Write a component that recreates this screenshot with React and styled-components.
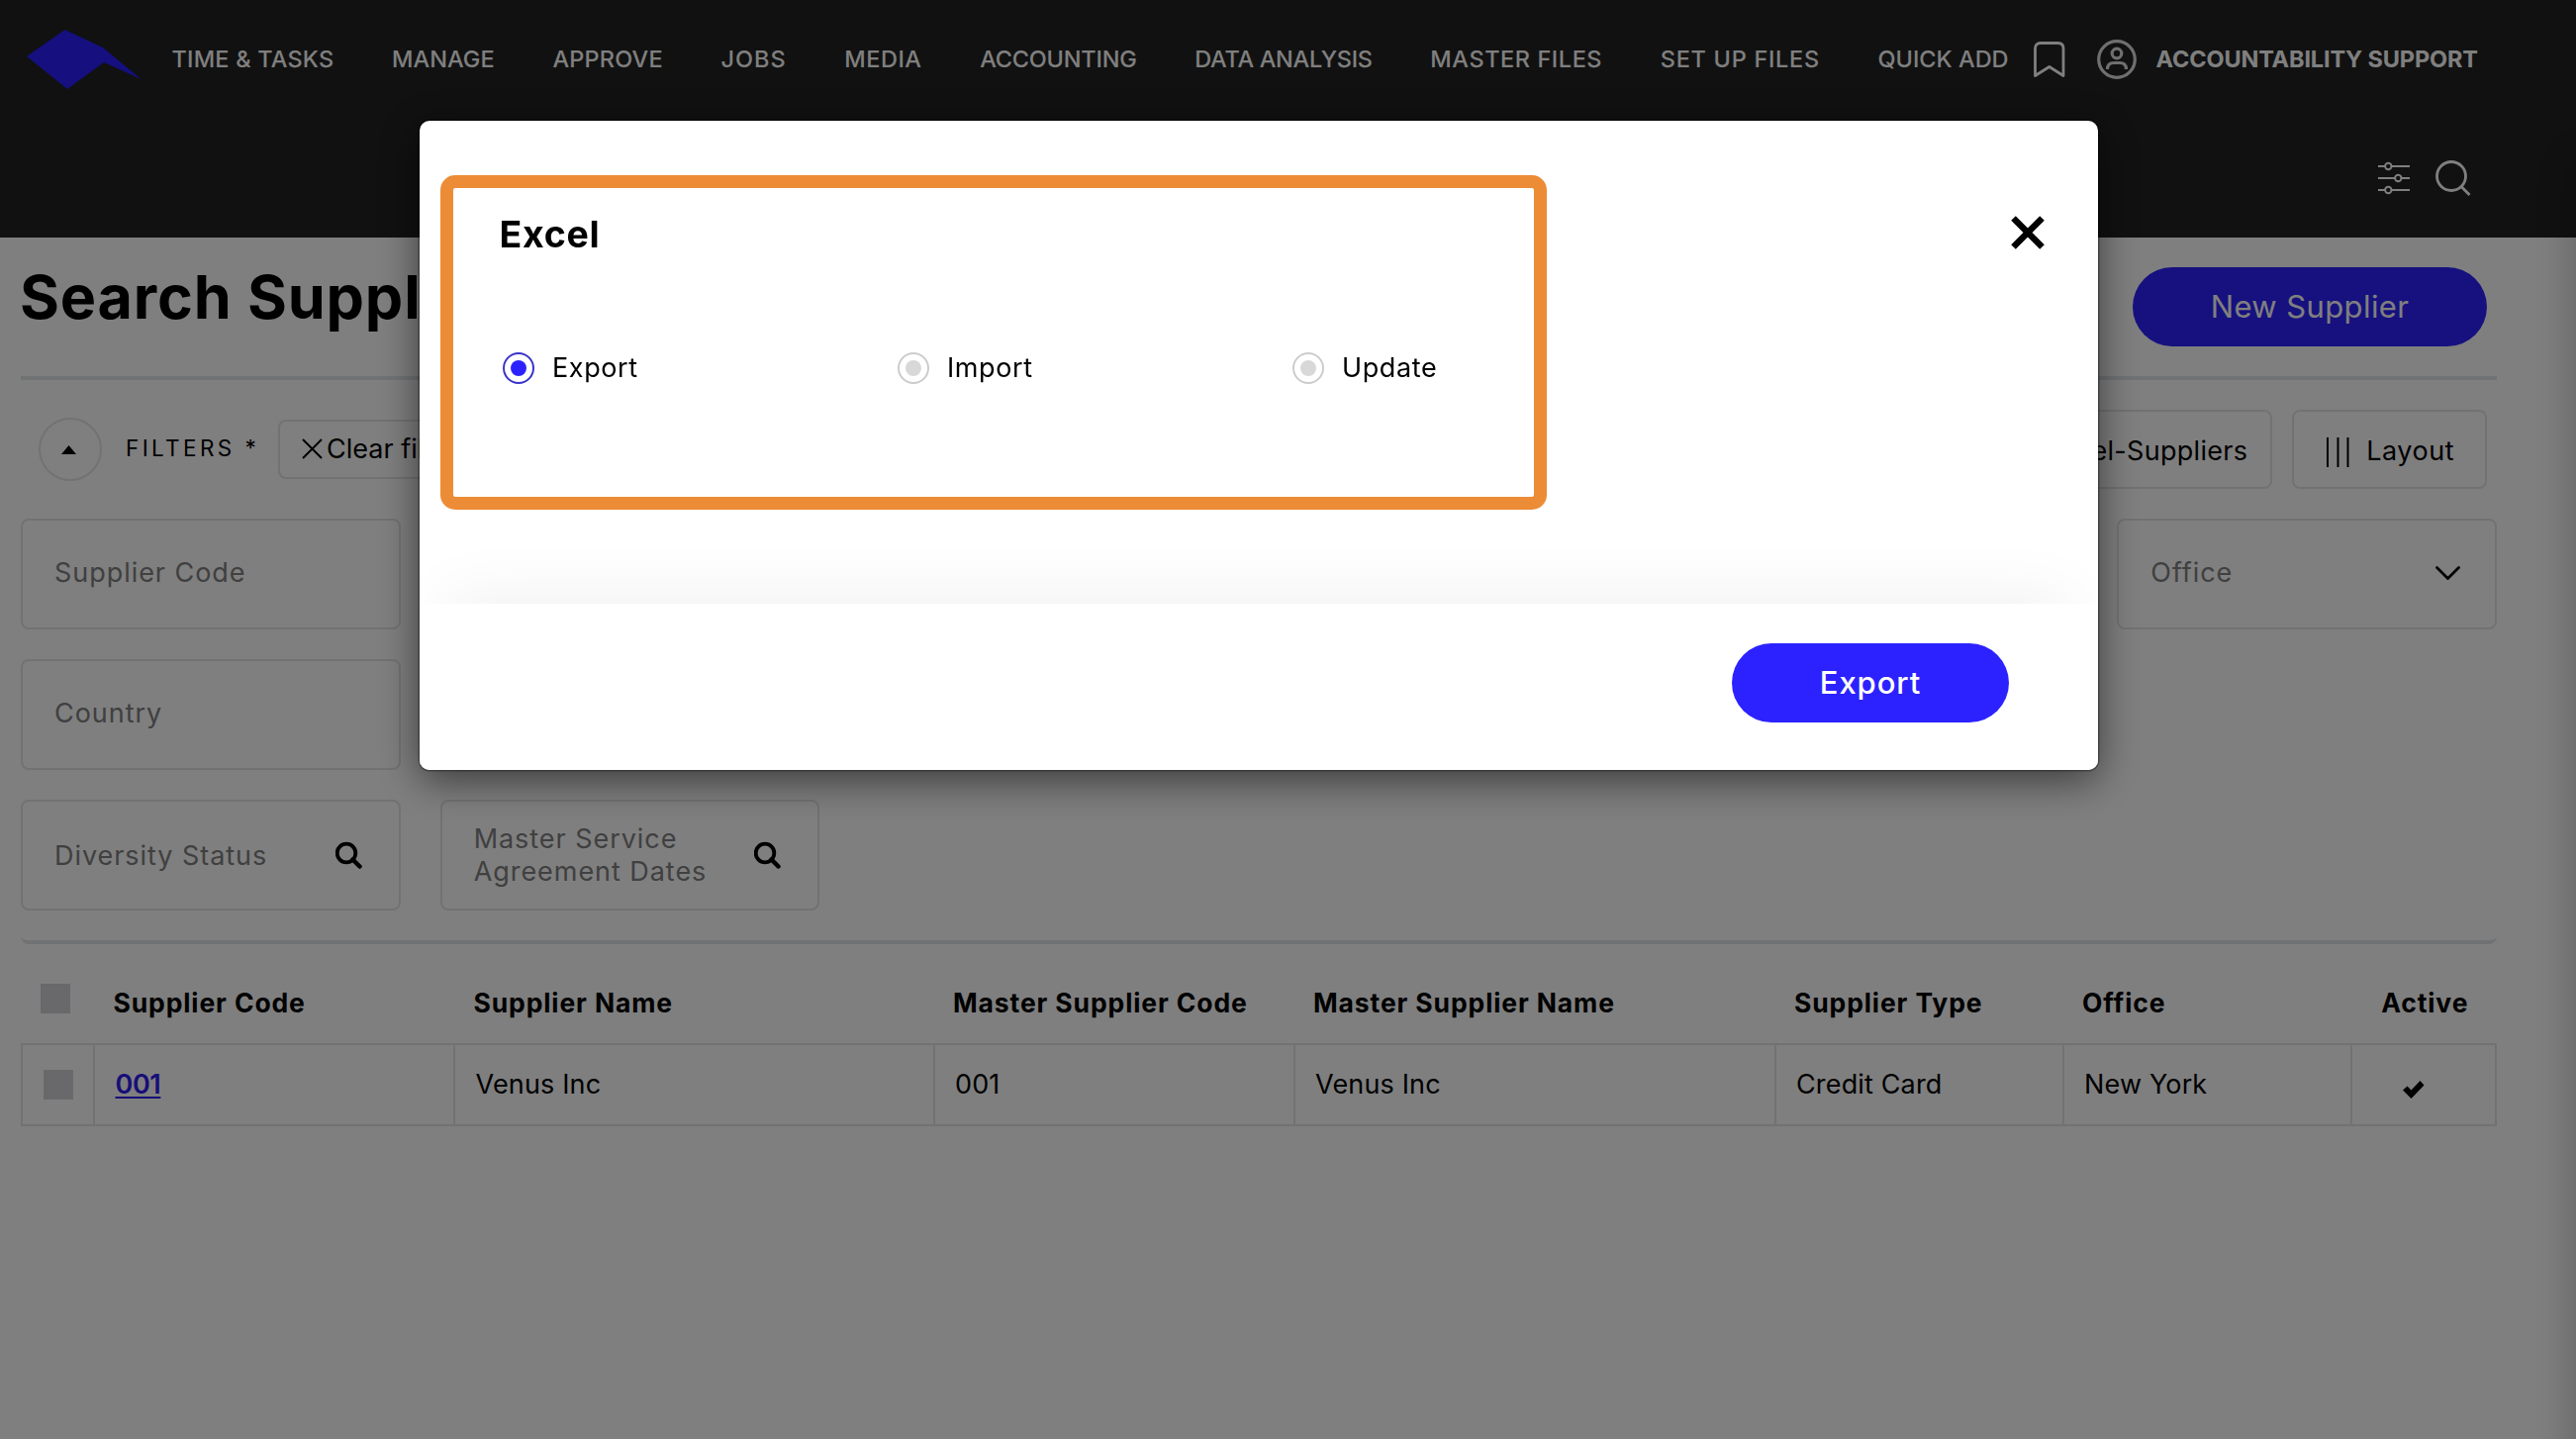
import React, { useState } from 'react';
import styled, { createGlobalStyle } from 'styled-components';

const GlobalStyle = createGlobalStyle`
    * { box-sizing: border-box; }
    body {
        margin: 0;
        background: #fff;
        color: #000;
        font-family: Inter, "Liberation Sans", sans-serif;
        font-size: 27px;
        overflow: hidden;
    }
    svg { display: block; flex: none; }
`;

const Page = styled.div`
    height: 1454px;
    overflow: hidden;
`;

// the edge of the help drawer, which is closed, throws a soft shadow on the page
const DrawerShadow = styled.div`
    position: fixed;
    top: 160px; right: -40px; bottom: -60px;
    width: 40px;
    box-shadow: 0 0 44px rgba(0, 0, 0, 0.27);
`;

/* header */
const Header = styled.header`
    height: 240px;
    background: #222;
    color: #fff;
`;

const NavRow = styled.nav`
    display: flex;
    align-items: center;
    height: 120px;
    padding-left: 27px;
`;

const NavList = styled.div`
    display: flex;
    gap: 58.7px;
    margin-left: 30.5px;
`;

const NavItem = styled.span`
    font-size: 23.5px;
    font-weight: 500;
    line-height: 30px;
    letter-spacing: ${(p) => p.$ls}px;
    white-space: nowrap;
`;

const UserArea = styled.div`
    display: flex;
    align-items: center;
    gap: 32px;
    margin-left: 25px;
`;

const UserLink = styled.div`
    display: flex;
    align-items: center;
    gap: 20px;
`;

const UserName = styled.span`
    padding-bottom: 1px;
    font-size: 23.5px;
    font-weight: 700;
    letter-spacing: -0.16px;
`;

const ToolRow = styled.div`
    display: flex;
    justify-content: flex-end;
    align-items: center;
    gap: 26px;
    height: 120px;
    padding-right: 105px;
`;

/* main */
const Main = styled.main`
    width: 2502px;
    margin-left: 21px;
`;

const TitleRow = styled.div`
    display: flex;
    align-items: center;
    justify-content: space-between;
    height: 144px;
    padding-right: 10px;
    border-bottom: 4px solid #e2e5e8;
`;

const Title = styled.h1`
    margin: 0 0 20px -1px;
    font-size: 61px;
    font-weight: 700;
    line-height: 70px;
    letter-spacing: 0.85px;
`;

const Pill = styled.button`
    width: ${(p) => p.$width}px;
    height: 80px;
    padding: 0 0 1px;
    border: none;
    border-radius: 40px;
    background: #2c22ff;
    color: #fff;
    font-family: inherit;
    font-size: 31px;
    font-weight: ${(p) => p.$weight || 400};
    letter-spacing: ${(p) => p.$ls}px;
`;

const FilterBar = styled.div`
    display: flex;
    align-items: center;
    height: 140px;
    padding: 0 10px 0 18px;
`;

const Toggle = styled.div`
    display: flex;
    align-items: center;
    justify-content: center;
    width: 64px;
    height: 64px;
    padding-right: 3px;
    border: 2px solid #e4e4e4;
    border-radius: 50%;
`;

const FilterTitle = styled.span`
    width: 154px;
    margin: 0 0 4px 24px;
    font-size: 22.5px;
    letter-spacing: 3.4px;
    white-space: nowrap;
`;

const BoxButton = styled.div`
    display: flex;
    align-items: center;
    gap: ${(p) => p.$gap}px;
    height: ${(p) => p.$height}px;
    padding: ${(p) => p.$pad};
    border: 2px solid #e4e4e4;
    border-radius: 8px;
    letter-spacing: ${(p) => p.$ls}px;
    white-space: nowrap;
`;

const BarRight = styled.div`
    display: flex;
    gap: 20px;
    margin-left: auto;
`;

const FilterGrid = styled.div`
    display: grid;
    grid-template-columns: repeat(6, 1fr);
    grid-auto-rows: 112px;
    gap: 30px 40px;
    padding-bottom: 30px;
    border-bottom: 4px solid #e2e5e8;
    border-radius: 8px;
`;

const Field = styled.div`
    grid-column: ${(p) => p.$col};
    display: flex;
    align-items: center;
    justify-content: space-between;
    padding: ${(p) => (p.$search ? '0 36px 0 32px' : '0 35px 3px 32px')};
    border: 2px solid #e4e4e4;
    border-radius: 8px;
    color: #808080;
    line-height: 33px;
    letter-spacing: 0.95px;
    svg { color: #000; }
`;

/* table */
const Row = styled.div`
    display: grid;
    grid-template-columns: 73px 364px 484.5px 364px 486px 291px 291px 1fr;
`;

const HeadRow = styled(Row)`
    height: 100px;
    font-size: 26.5px;
    font-weight: 700;
    letter-spacing: 0.88px;
`;

const HeadCell = styled.div`
    display: flex;
    align-items: center;
    justify-content: ${(p) => (p.$center ? 'center' : 'flex-start')};
    padding: ${(p) => (p.$center ? '18px 0 0 3px' : '18px 0 0 20.5px')};
`;

const HeadCheck = styled.div`
    padding: 40px 0 0 20px;
`;

const BodyRow = styled(Row)`
    height: 84px;
    border: 2px solid #e4e4e4;
    border-width: 2px 2px 2px 0;
    letter-spacing: 0.15px;
`;

const Cell = styled.div`
    display: flex;
    align-items: center;
    padding: 0 0 2px 20.5px;
    border-left: 2px solid #e4e4e4;
`;

const SelectCell = styled(Cell)`
    padding-bottom: 0;
`;

const ActiveCell = styled(Cell)`
    padding: 10px 0 0 51px;
`;

const Checkbox = styled.div`
    width: 30px;
    height: 30px;
    background: #d3d3d6;
`;

const CodeLink = styled.a`
    color: #2e1cf0;
    font-weight: 600;
    letter-spacing: -0.4px;
    text-decoration: underline;
    text-decoration-thickness: 2px;
    text-underline-offset: 3px;
`;

/* modal */
const Overlay = styled.div`
    position: fixed;
    inset: 0;
    display: flex;
    align-items: flex-start;
    padding: 122px 0 0 424px;
    background: rgba(0, 0, 0, 0.5);
`;

const Modal = styled.div`
    position: relative;
    width: 1696px;
    height: 656px;
    border-radius: 10px;
    background: #fff;
    box-shadow: 0 0 0 1.5px rgba(0, 0, 0, 0.3), 0 10px 40px rgba(0, 0, 0, 0.55);
`;

const ModalBody = styled.div`
    height: 488px;
    padding-top: 83px;
    overflow: hidden;
`;

const ModalHead = styled.div`
    display: flex;
    align-items: center;
    justify-content: space-between;
    height: 60px;
    padding: 0 54px 0 80.5px;
`;

const ModalTitle = styled.h2`
    margin: 2px 0 0;
    font-size: 37.5px;
    font-weight: 700;
    letter-spacing: 0.7px;
`;

const Options = styled.div`
    display: flex;
    margin-top: 87px;
    padding-left: 84px;
`;

const Option = styled.label`
    display: flex;
    align-items: center;
    width: 399px;
    height: 40px;
`;

const OptionText = styled.span`
    padding: 0 0 2px 18px;
    letter-spacing: 0.6px;
`;

const Radio = styled.span`
    display: flex;
    align-items: center;
    justify-content: center;
    width: 32px;
    height: 32px;
    border: 2px solid ${(p) => (p.$on ? '#3a33cc' : '#ccc')};
    border-radius: 50%;
    &::after {
        content: '';
        width: 16px;
        height: 16px;
        border-radius: 50%;
        background: ${(p) => (p.$on ? '#2c22ff' : '#d8d8d8')};
    }
`;

const ModalFooter = styled.div`
    display: flex;
    align-items: center;
    justify-content: flex-end;
    height: 168px;
    padding: 0 90px 8px 0;
    border-radius: 0 0 10px 10px;
    background: #fff;
`;

const FooterShadow = styled.div`
    height: 60px;
    margin: 218px 30px 0;
    box-shadow: 0 0 70px rgba(0, 0, 0, 0.08);
`;

const Highlight = styled.div`
    position: absolute;
    left: 21px; top: 55px;
    width: 1118px; height: 337.5px;
    border: 13px solid #ec8c36;
    border-radius: 15px;
    pointer-events: none;
`;

const navItems = [
    { label: 'TIME & TASKS', ls: 0.2 },
    { label: 'MANAGE', ls: 0.05 },
    { label: 'APPROVE', ls: 0.19 },
    { label: 'JOBS', ls: 1 },
    { label: 'MEDIA', ls: 0.51 },
    { label: 'ACCOUNTING', ls: -0.22 },
    { label: 'DATA ANALYSIS', ls: -0.3 },
    { label: 'MASTER FILES', ls: 0.56 },
    { label: 'SET UP FILES', ls: 0.7 },
    { label: 'QUICK ADD', ls: 0 }
];

const columns = ['Supplier Code', 'Supplier Name', 'Master Supplier Code', 'Master Supplier Name', 'Supplier Type', 'Office'];

const suppliers = [
    { code: '001', name: 'Venus Inc', masterCode: '001', masterName: 'Venus Inc', type: 'Credit Card', office: 'New York' }
];

const Logo = () => (
    <svg width="116" height="60" viewBox="0 0 116 60">
        <path d="M0 27 38.5 0 77 18 115.5 50 78 33 41 60Z" fill="#2a1eff" />
    </svg>
);

const BookmarkIcon = () => (
    <svg width="32" height="36" viewBox="0 0 32 36" fill="none" stroke="#fff" strokeWidth="2.8" strokeLinejoin="round">
        <path d="M1.5 34.5V7q0-5.5 5.5-5.5h17.5q5.5 0 5.5 5.5v27.5L15.8 25.5z" />
    </svg>
);

const UserIcon = () => (
    <svg width="40" height="40" viewBox="0 0 40 40" fill="none" stroke="#fff" strokeWidth="3.2" opacity="0.85">
        <circle cx="20" cy="20" r="18.3" />
        <circle cx="20" cy="14" r="4.8" />
        <path d="M10.5 30q0-6.5 6.5-6.5h6q6.5 0 6.5 6.5" />
    </svg>
);

const SlidersIcon = () => (
    <svg width="32" height="34" viewBox="0 0 32 34" fill="#222" stroke="#fff" strokeWidth="2">
        <path d="M0 5h32M0 17h32M0 29h32" />
        <circle cx="10.3" cy="5" r="3.2" />
        <circle cx="20.3" cy="17" r="3.2" />
        <circle cx="10.3" cy="29" r="3.2" />
    </svg>
);

const SearchIcon = () => (
    <svg width="37" height="38" viewBox="0 0 37 38" fill="none" stroke="#fff" strokeWidth="2.8">
        <circle cx="16" cy="17" r="14.5" />
        <path d="M26 27.5 34.5 36" />
    </svg>
);

const FieldSearch = () => (
    <svg width="28" height="28" viewBox="0 0 28 28" fill="none" stroke="currentColor" strokeWidth="3.8">
        <circle cx="11" cy="12" r="9.3" />
        <path d="M17.5 18.5 24.5 25.5" strokeWidth="4.5" strokeLinecap="round" />
    </svg>
);

const Chevron = () => (
    <svg width="25" height="14" viewBox="0 0 25 14" fill="none" stroke="currentColor" strokeWidth="2.8" strokeLinecap="round">
        <path d="M1.5 1.5 12.5 12.5 23.5 1.5" />
    </svg>
);

export default function App() {
    const [mode, setMode] = useState('Export');

    return (
        <>
            <GlobalStyle />
            <Page>
                <Header>
                    <NavRow>
                        <Logo />
                        <NavList>
                            {navItems.map((e) => <NavItem key={e.label} $ls={e.ls}>{e.label}</NavItem>)}
                        </NavList>
                        <UserArea>
                            <BookmarkIcon />
                            <UserLink>
                                <UserIcon />
                                <UserName>ACCOUNTABILITY SUPPORT</UserName>
                            </UserLink>
                        </UserArea>
                    </NavRow>
                    <ToolRow>
                        <SlidersIcon />
                        <SearchIcon />
                    </ToolRow>
                </Header>

                <Main>
                    <TitleRow>
                        <Title>Search Suppliers</Title>
                        <Pill $width={358} $ls={0.4}>New Supplier</Pill>
                    </TitleRow>

                    <FilterBar>
                        <Toggle>
                            <svg width="15" height="9" viewBox="0 0 15 9"><path d="M0 9 7.5 0 15 9Z" /></svg>
                        </Toggle>
                        <FilterTitle>FILTERS *</FilterTitle>
                        <BoxButton $height={60} $gap={4} $pad="0 22px 1px" $ls={0}>
                            <svg width="21" height="21" viewBox="0 0 21 21" stroke="#000" strokeWidth="2">
                                <path d="M1 1 20 20M20 1 1 20" />
                            </svg>
                            Clear filters
                        </BoxButton>
                        <BarRight>
                            <BoxButton $height={80} $gap={16} $pad="2px 23px 0" $ls={0.3}>Excel-Suppliers</BoxButton>
                            <BoxButton $height={80} $gap={17} $pad="2px 31px 0 33px" $ls={0.5}>
                                <svg width="23" height="36" viewBox="0 0 23 36" stroke="#000" strokeWidth="2">
                                    <path d="M1 5v30M11.5 5v30M21.5 5v30" />
                                </svg>
                                Layout
                            </BoxButton>
                        </BarRight>
                    </FilterBar>

                    <FilterGrid>
                        <Field>Supplier Code</Field>
                        <Field $col={6}>Office <Chevron /></Field>
                        <Field $col={1}>Country</Field>
                        <Field $col={1} $search>Diversity Status <FieldSearch /></Field>
                        <Field $search><span>Master Service<br />Agreement Dates</span> <FieldSearch /></Field>
                    </FilterGrid>

                    <HeadRow>
                        <HeadCheck><Checkbox /></HeadCheck>
                        {columns.map((c) => <HeadCell key={c}>{c}</HeadCell>)}
                        <HeadCell $center>Active</HeadCell>
                    </HeadRow>
                    {suppliers.map((s) => (
                        <BodyRow key={s.code}>
                            <SelectCell><Checkbox /></SelectCell>
                            <Cell><CodeLink>{s.code}</CodeLink></Cell>
                            <Cell>{s.name}</Cell>
                            <Cell>{s.masterCode}</Cell>
                            <Cell>{s.masterName}</Cell>
                            <Cell>{s.type}</Cell>
                            <Cell>{s.office}</Cell>
                            <ActiveCell>
                                <svg width="22" height="18" viewBox="0 0 22 18"><path d="M0 9.5 4.5 5.5 8.5 9.5 17.5 0 21.5 4.5 8.5 18Z" /></svg>
                            </ActiveCell>
                        </BodyRow>
                    ))}
                </Main>
                <DrawerShadow />
            </Page>

            <Overlay>
                <Modal>
                    <ModalBody>
                        <ModalHead>
                            <ModalTitle>Excel</ModalTitle>
                            <svg width="34" height="34" viewBox="0 0 34 34" stroke="#000" strokeWidth="6.5">
                                <path d="M2.5 2.5 31.5 31.5M31.5 2.5 2.5 31.5" />
                            </svg>
                        </ModalHead>
                        <Options>
                            {['Export', 'Import', 'Update'].map((o) => (
                                <Option key={o} onClick={() => setMode(o)}>
                                    <Radio $on={mode === o} />
                                    <OptionText>{o}</OptionText>
                                </Option>
                            ))}
                        </Options>
                        <FooterShadow />
                    </ModalBody>
                    <ModalFooter>
                        <Pill $width={280} $weight={500} $ls={0.9}>{mode}</Pill>
                    </ModalFooter>
                    <Highlight />
                </Modal>
            </Overlay>
        </>
    );
}
